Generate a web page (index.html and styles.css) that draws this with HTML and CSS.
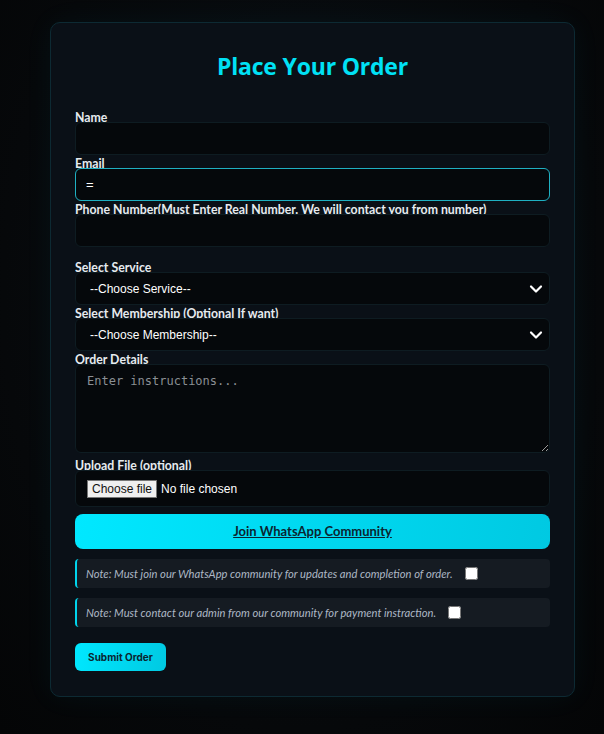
FILE: index.html
```html
<!DOCTYPE html>
<html lang="en">
<head>
<meta charset="utf-8">
<title>Place Your Order</title>
<link rel="stylesheet" href="styles.css">
</head>
<body>
<main class="card">
  <h2 class="title">Place Your Order</h2>
  <form class="form">
    <label class="lbl">Name</label>
    <input class="field" type="text">
    <label class="lbl">Email</label>
    <input class="field field-focus" type="email" value="=">
    <label class="lbl">Phone Number(Must Enter Real Number. We will contact you from number)</label>
    <input class="field field-phone" type="tel">
    <label class="lbl">Select Service</label>
    <div class="select-wrap">
      <select class="field select"><option>--Choose Service--</option></select>
      <svg class="chev" width="14" height="10" viewBox="0 0 14 10"><path d="M2 2.5 L7 7.5 L12 2.5" fill="none" stroke="#fff" stroke-width="2.2" stroke-linecap="round" stroke-linejoin="round"/></svg>
    </div>
    <label class="lbl">Select Membership (Optional If want)</label>
    <div class="select-wrap">
      <select class="field select"><option>--Choose Membership--</option></select>
      <svg class="chev" width="14" height="10" viewBox="0 0 14 10"><path d="M2 2.5 L7 7.5 L12 2.5" fill="none" stroke="#fff" stroke-width="2.2" stroke-linecap="round" stroke-linejoin="round"/></svg>
    </div>
    <label class="lbl">Order Details</label>
    <textarea class="field area" placeholder="Enter instructions..."></textarea>
    <label class="lbl">Upload File (optional)</label>
    <div class="field file"><button type="button" class="file-btn">Choose file</button><span class="file-name">No file chosen</span></div>
    <a class="wa" href="#">Join WhatsApp Community</a>
    <div class="note"><span>Note: Must join our WhatsApp community for updates and completion of order.</span><input type="checkbox" class="chk"></div>
    <div class="note"><span>Note: Must contact our admin from our community for payment instraction.</span><input type="checkbox" class="chk"></div>
    <div class="submit-row"><button type="button" class="submit">Submit Order</button></div>
  </form>
</main>
</body>
</html>
```
FILE: styles.css
```css
html, body { margin: 0; padding: 0; }
body {
  background: radial-gradient(ellipse at 50% 40%, #0b1015 0%, #06080a 70%, #040506 100%);
  min-height: 734px;
  font-family: "Lato", "Open Sans", sans-serif;
  color: #e4e9ee;
  padding-top: 22px;
  box-sizing: border-box;
}
.card {
  width: 525px;
  box-sizing: border-box;
  margin-left: 50px;
  background: #0a1017;
  border: 1px solid #0d2a33;
  border-radius: 10px;
  padding: 24px 24px 25px;
  box-shadow: 0 0 30px rgba(0, 200, 230, 0.05);
}
.title {
  margin: 0 0 26px;
  text-align: center;
  color: #00e1f5;
  font-family: "Open Sans", sans-serif;
  font-size: 23px;
  font-weight: 700;
  line-height: 38px;
  letter-spacing: -0.2px;
}
.form { display: flex; flex-direction: column; }
.lbl {
  display: block;
  height: 11px;
  overflow: hidden;
  font-size: 12.3px;
  line-height: 13px;
  font-weight: 700;
  color: #e6ebef;
  margin-top: 2px;
  white-space: nowrap;
}
.lbl:first-child { margin-top: 0; }
.field {
  display: block;
  width: 100%;
  box-sizing: border-box;
  height: 33px;
  margin: 0;
  background: #05080b;
  border: 1px solid #0e1c22;
  border-radius: 6px;
  color: #fff;
  padding: 0 10px;
  font-family: "Liberation Sans", Arial, sans-serif;
  font-size: 12px;
  outline: none;
}
.field-focus { border-color: #1fb0c2; font-size: 13px; }
.field-phone { margin-bottom: 12px; }
.select-wrap { position: relative; }
.select {
  appearance: none;
  -webkit-appearance: none;
  padding-left: 14px;
}
.chev { position: absolute; right: 7px; top: 12px; }
.area {
  height: 89px;
  padding: 9px 11px;
  font-family: "DejaVu Sans Mono", "Liberation Mono", monospace;
  font-size: 12px;
  resize: vertical;
  margin-bottom: 4px;
}
.area::placeholder { color: #8a8f94; }
.file {
  display: flex;
  align-items: center;
  height: 37px;
  padding: 0 11px;
}
.file-btn {
  font-family: "Liberation Sans", Arial, sans-serif;
  font-size: 12px;
  background: #efefef;
  color: #111;
  border: 1px solid #767676;
  border-radius: 0;
  padding: 0 4px;
  height: 18px;
  line-height: 16px;
  margin: 0 4px 0 0;
}
.file-name { color: #fff; font-size: 12px; }
.wa {
  display: block;
  margin-top: 7px;
  height: 35px;
  line-height: 35px;
  border-radius: 8px;
  background: linear-gradient(100deg, #00e8ff 0%, #00c9e2 100%);
  text-align: center;
  color: #0a2530;
  font-size: 13px;
  font-weight: 700;
  text-decoration: underline;
}
.note {
  display: flex;
  align-items: center;
  margin-top: 10px;
  height: 29px;
  box-sizing: border-box;
  background: #151b22;
  border-left: 2px solid #00d4ec;
  border-radius: 4px;
  padding-left: 9px;
  font-size: 11.2px;
  font-style: italic;
  color: #adb8c5;
}
.chk {
  margin: 0 0 0 12px;
  width: 13px;
  height: 13px;
}
.submit-row { margin-top: 16px; }
.submit {
  width: 91px;
  height: 28px;
  border: 0;
  border-radius: 6px;
  background: linear-gradient(100deg, #00e8ff 0%, #00c9e2 100%);
  color: #0a2530;
  font-family: "Inter", sans-serif;
  font-size: 10px;
  font-weight: 700;
  padding: 0;
}
```
